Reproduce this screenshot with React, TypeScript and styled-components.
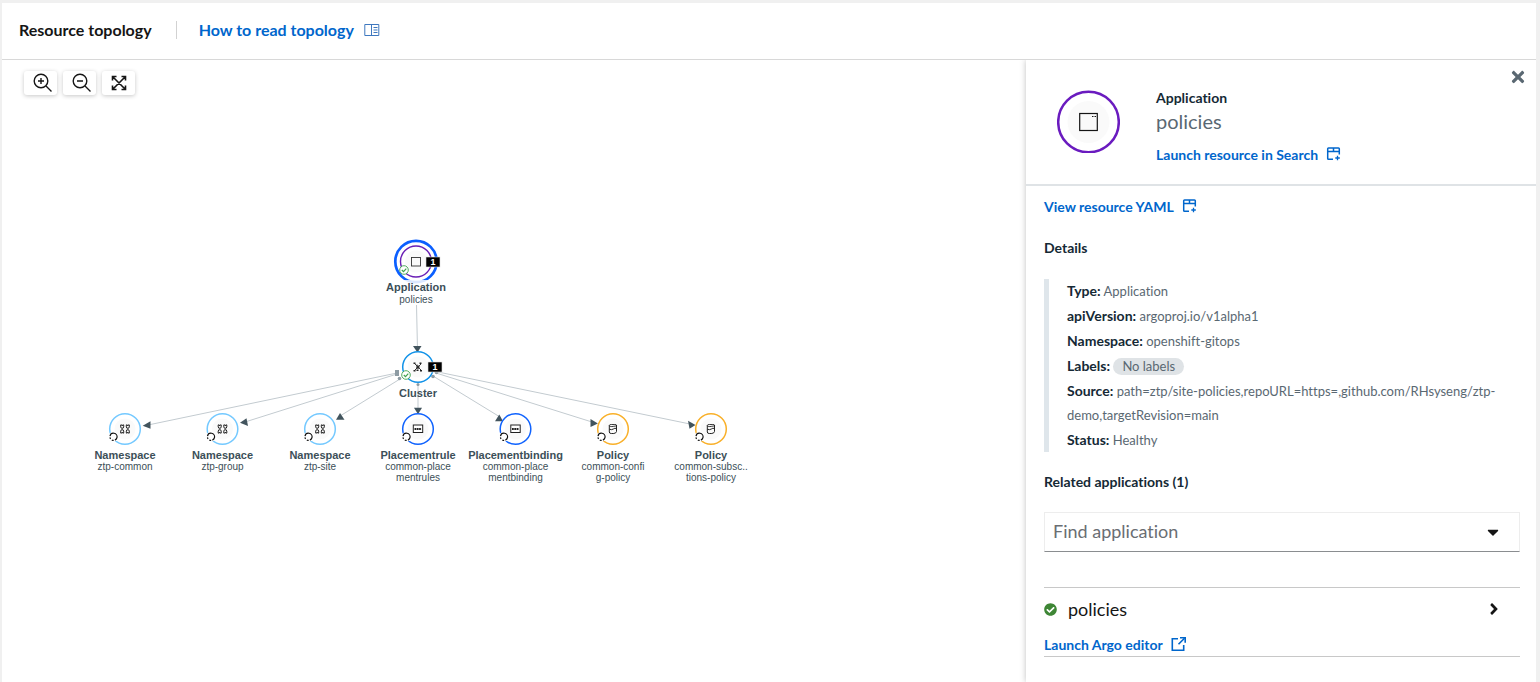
import React from "react";
import styled, { createGlobalStyle } from "styled-components";
import { FaTimes, FaCaretDown, FaAngleRight, FaCheckCircle } from "react-icons/fa";

const GlobalStyle = createGlobalStyle`
  *, *::before, *::after { box-sizing: border-box; }
  body {
    margin: 0;
    background: #f0f0f0;
    color: #151515;
    font-family: Lato, "Liberation Sans", sans-serif;
    font-size: 14px;
    font-variant-ligatures: none;
    line-height: 24px;
  }
`;

const Page = styled.main`
  display: flex;
  flex-direction: column;
  min-height: 100vh;
  padding: 3px 4px 0 2px;
`;

const Header = styled.header`
  display: flex;
  align-items: center;
  height: 57px;
  padding: 0 17px 2px;
  background: #fff;
  border-bottom: 1px solid #d8d8d8;
`;

const Title = styled.h1`
  margin: 0 22px 0 0;
  padding-right: 24px;
  border-right: 1px solid #d2d2d2;
  font-size: 16px;
  font-weight: 700;
  line-height: 18px;
  color: #151515;
`;

const Link = styled.a<{ $large?: boolean }>`
  display: inline-flex;
  align-items: center;
  gap: ${(p) => (p.$large ? "10px" : "8px")};
  color: #06c;
  font-size: ${(p) => (p.$large ? "16px" : "14px")};
  font-weight: 700;
  line-height: 20px;
  text-decoration: none;

  svg { flex: none; }
`;

const Body = styled.div`
  display: flex;
  flex: 1;
  background: #fff;
`;

const Canvas = styled.section`
  flex: 1;
  min-width: 0;
  overflow: hidden;
`;

const Toolbar = styled.div`
  display: flex;
  gap: 6px;
  height: 40px;
  padding: 11px 22px 4px;
`;

const ToolButton = styled.button`
  display: flex;
  align-items: center;
  justify-content: center;
  width: 33px;
  height: 24px;
  padding: 0;
  border: 0;
  border-radius: 3px;
  background: #fff;
  box-shadow: 0 1px 4px rgba(0, 0, 0, 0.22);
  color: #161616;
`;

const Graph = styled.svg`
  display: block;
  width: 100%;
  height: 400px;
  font-family: "Liberation Sans", Arial, sans-serif;
  text-anchor: middle;
  fill: #3c4f58;
`;

const NodeTitle = styled.text`
  font-size: 11px;
  font-weight: 700;
`;

const NodeName = styled.text`
  font-size: 10px;
`;

const Drawer = styled.aside`
  flex: none;
  width: 510px;
  background: #fff;
  box-shadow: 0 0 6px rgba(0, 0, 0, 0.25);
  clip-path: inset(0 0 0 -8px);
`;

const DrawerHeader = styled.div`
  display: flex;
  align-items: flex-start;
  height: 126px;
  padding: 8px 9px 0 31px;
  border-bottom: 2px solid #dfe3e6;
`;

const DrawerIcon = styled.svg`
  flex: none;
  margin: 22px 36px 0 0;
`;

const DrawerHeading = styled.div`
  display: flex;
  flex: 1;
  flex-direction: column;
  align-items: flex-start;
  padding-top: 20px;
`;

const Kind = styled.div`
  color: #152935;
  font-weight: 700;
  line-height: 20px;
`;

const ResourceName = styled.h2`
  margin: 0 0 11px;
  color: #5a6872;
  font-size: 20px;
  font-weight: 400;
  line-height: 26px;
`;

const CloseButton = styled.button`
  display: flex;
  padding: 0;
  border: 0;
  background: none;
  color: #5a6872;
  font-size: 18px;
`;

const DrawerBody = styled.div`
  display: flex;
  flex-direction: column;
  align-items: flex-start;
  padding: 11px 16px 24px 18px;
`;

const SectionTitle = styled.h3<{ $top: number }>`
  margin: ${(p) => p.$top}px 0 0;
  color: #152935;
  font-size: 14px;
  font-weight: 700;
  line-height: 20px;
`;

const DetailList = styled.ul`
  display: flex;
  flex-direction: column;
  gap: 1px;
  align-self: stretch;
  margin: 21px 0 0;
  padding: 0 0 0 18px;
  border-left: 5px solid #dfe6eb;
  list-style: none;
`;

const Detail = styled.li`
  color: #5a6872;
  font-size: 13px;
  line-height: 24px;

  b {
    color: #152935;
    font-size: 14px;
    font-weight: 700;
    line-height: 20px;
  }
`;

const Pill = styled.span`
  display: inline-block;
  padding: 0 9px;
  border-radius: 9px;
  background: #dfe3e6;
  line-height: 17px;
`;

const Search = styled.div`
  display: flex;
  align-items: center;
  align-self: stretch;
  height: 40px;
  margin-top: 20px;
  border: 1px solid #ededed;
  border-bottom-color: #8a8d90;
`;

const SearchInput = styled.input`
  flex: 1;
  min-width: 0;
  padding: 0 8px 2px;
  border: 0;
  outline: 0;
  background: none;
  font: inherit;
  font-size: 18px;

  &::placeholder { color: #6a6e73; opacity: 1; }
`;

const ArrowButton = styled.button`
  display: flex;
  justify-content: center;
  width: 16px;
  padding: 0;
  margin-right: 18px;
  border: 0;
  background: none;
  color: #151515;
  font-size: 18px;
`;

const AppCard = styled.div`
  align-self: stretch;
  margin-top: 35px;
  padding-top: 7px;
  border-top: 1px solid #c8c8c8;
  border-bottom: 1px solid #c8c8c8;
`;

const AppRow = styled.div`
  display: flex;
  align-items: center;
  height: 28px;
  margin-bottom: 10px;
  font-size: 18px;
`;

const AppName = styled.span`
  flex: 1;
  margin-left: 11px;
`;

const CardLink = styled.div`
  display: flex;
  height: 23px;
`;

const ZoomIcon = ({ plus }: { plus?: boolean }) => (
  <svg width="20" height="20" viewBox="0 0 20 20" fill="none" stroke="currentColor" strokeWidth="1.4" transform="translate(2 0)">
    <circle cx="8" cy="8" r="6.8" />
    <path d="M13 13l5.500 5.500M5 8h6" />
    {plus && <path d="M8 5v6" />}
  </svg>
);

const FitIcon = () => (
  <svg width="16" height="16" viewBox="0 0 16 16" fill="none" stroke="currentColor" strokeWidth="1.600">
    <path d="M1.500 5.500v-4h4M10.500 1.500h4v4M14.500 10.500v4h-4M5.500 14.500h-4v-4M1.500 1.500l13 13M14.500 1.500l-13 13" />
  </svg>
);

const GuideIcon = () => (
  <svg width="16" height="14" viewBox="0 0 16 14" fill="none" stroke="#3f78bf">
    <path d="M.8 1.500h14v11H.8zM7.500 1.500v11M9.500 4.500h4M9.500 7h4M9.500 9.500h4" />
  </svg>
);

const OpenViewIcon = () => (
  <svg width="15" height="18" viewBox="0 0 15 18" fill="none" stroke="#06c" strokeWidth="1.500">
    <path d="M7 13.200H2.500q-.8 0-.8-.8V2.800q0-.8.8-.8h10q.8 0 .8.800V8.500M1.700 5.500h11.600M7.500 2v3.500" />
    <path d="M9.300 12h4.500M11.500 9.800v4.500" strokeWidth="1.300" />
  </svg>
);

const ExternalIcon = () => (
  <svg width="15" height="18" viewBox="0 0 15 18" fill="none" stroke="#06c" strokeWidth="1.600">
    <path d="M7 2.800H1.300v11.400h11.400V9M7.500 8.300L13.500 2.300" />
    <path d="M9 1.800h5.200v5" />
  </svg>
);

type Glyph = "namespace" | "rule" | "policy";

const GLYPHS: Record<Glyph, React.ReactNode> = {
  namespace: (
    <g fill="none" stroke="#222">
      {[-2.800, 2.800].map((x) =>
        [-2.300, 2.300].map((y) => {
          const side = Math.sign(y);
          return (
            <path
              key={`${x}${y}`}
              d={`M${x - 1.500} ${y + side * 1.800}h1l.500 ${-side}l.500 ${side}h1v${-side * 2}l-.6 ${-side * 1.300}h-1.800l-.6 ${side * 1.300}z`}
            />
          );
        })
      )}
    </g>
  ),
  rule: (
    <g>
      <rect x="-4.700" y="-4" width="9.400" height="7.500" fill="#fff" stroke="#222" />
      <path d="M-3.500 0h7" stroke="#222" strokeWidth="2.200" strokeDasharray="1.800 .5" />
    </g>
  ),
  policy: (
    <g fill="none" stroke="#222">
      <path d="M-3.700-3.500v6.500q0 1.500 2 1.500h2.500q2.700-.5 2.700-2v-6.500M-3.700 .2q2.500 1 4-.200t3.200-.5" />
      <path d="M-3.700-3.500q0-1 2-1h3.500q1.700 0 1.700.8t-2.700 1q-4.500.8-4.500-.8z" strokeWidth="0.900" />
    </g>
  ),
};

const NODES: { x: number; kind: string; name: string[]; color: string; glyph: Glyph }[] = [
  { x: 123, kind: "Namespace", name: ["ztp-common"], color: "#74c9ff", glyph: "namespace" },
  { x: 220.5, kind: "Namespace", name: ["ztp-group"], color: "#74c9ff", glyph: "namespace" },
  { x: 318, kind: "Namespace", name: ["ztp-site"], color: "#74c9ff", glyph: "namespace" },
  { x: 416, kind: "Placementrule", name: ["common-place", "mentrules"], color: "#1063fe", glyph: "rule" },
  { x: 513.5, kind: "Placementbinding", name: ["common-place", "mentbinding"], color: "#1063fe", glyph: "rule" },
  { x: 611, kind: "Policy", name: ["common-confi", "g-policy"], color: "#f9b029", glyph: "policy" },
  { x: 709, kind: "Policy", name: ["common-subsc..", "tions-policy"], color: "#f9b029", glyph: "policy" },
];

const EDGES: { line: string; head: string }[] = [
  { line: "M414.500 205L415.500 250", head: "411,246 419.500,246 415.500,252.500" },
  { line: "M395 273L146 325", head: "140.700,325.700 148.500,321.300 148.500,328.700" },
  { line: "M395 274L243 322", head: "238,322.700 244.500,318.300 246,326" },
  { line: "M398 279L338 316", head: "334,319.700 342.500,319.700 338,313" },
  { line: "M416 284V310", head: "412,307.700 420,307.700 416,314.200" },
  { line: "M431 276L498 317", head: "493,321.300 501,321.300 497.300,314.500" },
  { line: "M434 273L590 322", head: "588.500,319 595.900,323.500 588.500,327" },
  { line: "M436 272L688 324", head: "686,320.700 693.500,325 687.500,328.700" },
];

const Healthy = ({ x, y }: { x: number; y: number }) => (
  <g transform={`translate(${x} ${y})`} fill="#fff" stroke="#3fa34d">
    <circle r="4.300" strokeWidth="0.900" />
    <path d="M-2.200 0l1.700 1.700L2.300-1.400" fill="none" strokeWidth="1.200" />
  </g>
);

const CountBadge = ({ x, y }: { x: number; y: number }) => (
  <g transform={`translate(${x} ${y})`}>
    <rect width="14" height="10" fill="#000" stroke="#ddd" strokeWidth="0.600" />
    <text x="7" y="8" fontSize="9" fontWeight="700" fill="#fff">1</text>
  </g>
);

const Topology = () => (
  <Graph role="img" aria-label="Resource topology diagram">
    {EDGES.map((e) => (
      <g key={e.head}>
        <path d={e.line} stroke="#c3cbd0" fill="none" />
        <polygon points={e.head} fill="#42545d" />
      </g>
    ))}
    <g fill="#8d9ba3">
      <rect x="393" y="270" width="4" height="6" />
      <circle cx="397.500" cy="278.500" r="1.800" />
      <circle cx="416" cy="284.500" r="1.500" />
      <circle cx="431" cy="276.500" r="1.800" />
      <circle cx="434.500" cy="272.500" r="1.800" />
    </g>

    <circle cx="414" cy="161.500" r="20.700" fill="#fff" stroke="#0b5fff" strokeWidth="2.700" />
    <circle cx="414" cy="161.500" r="15.500" fill="#fff" stroke="#6a1fb5" strokeWidth="1.400" />
    <circle cx="414" cy="161.500" r="11" fill="#fafafa" />
    <rect x="409.500" y="157.500" width="9" height="8.500" fill="#fafafa" stroke="#333" strokeWidth="0.900" />
    <Healthy x={402} y={170} />
    <CountBadge x={424} y={157} />
    <rect x="383" y="180" width="62" height="25" fill="#fff" opacity="0.850" />
    <NodeTitle x="414" y="191">Application</NodeTitle>
    <NodeName x="414" y="203">policies</NodeName>

    <circle cx="416" cy="267" r="15.300" fill="#fff" stroke="#1192e8" strokeWidth="1.500" />
    <circle cx="416" cy="267" r="10.500" fill="#fafafa" />
    <g transform="translate(416 267)" stroke="#222" fill="none" strokeWidth="0.900">
      <path d="M-3-3L3 3M3-3L-3 3M-1-2.500v2M-2 1h3" />
      <path d="M-4.500-3.800h2M1.500-3.800h2M-4.500 3.800h2M2 3.800h2M-1.500 3.300h2" strokeWidth="1.400" />
      <circle r="1.200" />
    </g>
    <Healthy x={404} y={275} />
    <CountBadge x={426} y={262} />
    <NodeTitle x="416" y="297">Cluster</NodeTitle>

    {NODES.map((n) => (
      <g key={n.x} transform={`translate(${n.x} 329)`}>
        <circle r="15.300" fill="#fff" stroke={n.color} strokeWidth="1.500" />
        <circle r="10.500" fill="#fafafa" />
        {GLYPHS[n.glyph]}
        <circle cx="-11.500" cy="7.800" r="5" fill="#fff" />
        <circle cx="-11.500" cy="7.800" r="3.600" fill="none" stroke="#111" strokeWidth="1.200" strokeDasharray="9 1.200 2 1.500 1.500 1.500" transform="rotate(-80 -11.500 7.800)" />
        <NodeTitle y="30">{n.kind}</NodeTitle>
        {n.name.map((t, i) => (
          <NodeName key={t} y={41 + i * 11}>{t}</NodeName>
        ))}
      </g>
    ))}
  </Graph>
);

const App = () => (
  <>
    <GlobalStyle />
    <Page>
      <Header>
        <Title>Resource topology</Title>
        <Link href="#guide" $large>
          How to read topology
          <GuideIcon />
        </Link>
      </Header>
      <Body>
        <Canvas>
          <Toolbar>
            <ToolButton type="button" aria-label="Zoom in"><ZoomIcon plus /></ToolButton>
            <ToolButton type="button" aria-label="Zoom out"><ZoomIcon /></ToolButton>
            <ToolButton type="button" aria-label="Fit to screen"><FitIcon /></ToolButton>
          </Toolbar>
          <Topology />
        </Canvas>
        <Drawer>
          <DrawerHeader>
            <DrawerIcon width="63" height="63" viewBox="0 0 63 63">
              <circle cx="31.500" cy="32" r="30.300" fill="#fff" stroke="#6a1bbf" strokeWidth="2.500" />
              <circle cx="31.500" cy="32" r="21" fill="#fafafa" />
              <rect x="22.700" y="23.500" width="17.600" height="17" fill="none" stroke="#161616" strokeWidth="1.200" />
              <path d="M35 26.500h1.500M37.500 26.500H39" stroke="#161616" />
            </DrawerIcon>
            <DrawerHeading>
              <Kind>Application</Kind>
              <ResourceName>policies</ResourceName>
              <Link href="#search">
                Launch resource in Search
                <OpenViewIcon />
              </Link>
            </DrawerHeading>
            <CloseButton type="button" aria-label="Close"><FaTimes /></CloseButton>
          </DrawerHeader>
          <DrawerBody>
            <Link href="#yaml">
              View resource YAML
              <OpenViewIcon />
            </Link>
            <SectionTitle $top={21}>Details</SectionTitle>
            <DetailList>
              <Detail><b>Type:</b> Application</Detail>
              <Detail><b>apiVersion:</b> argoproj.io/v1alpha1</Detail>
              <Detail><b>Namespace:</b> openshift-gitops</Detail>
              <Detail><b>Labels:</b> <Pill>No labels</Pill></Detail>
              <Detail><b>Source:</b> path=ztp/site-policies,repoURL=https=,github.com/RHsyseng/ztp-demo,targetRevision=main</Detail>
              <Detail><b>Status:</b> Healthy</Detail>
            </DetailList>
            <SectionTitle $top={20}>Related applications (1)</SectionTitle>
            <Search>
              <SearchInput type="text" placeholder="Find application" aria-label="Find application" />
              <ArrowButton type="button" aria-label="Show applications"><FaCaretDown /></ArrowButton>
            </Search>
            <AppCard>
              <AppRow>
                <FaCheckCircle size={13} color="#3e8635" />
                <AppName>policies</AppName>
                <ArrowButton type="button" aria-label="Expand policies"><FaAngleRight /></ArrowButton>
              </AppRow>
              <CardLink>
                <Link href="#argo">
                  Launch Argo editor
                  <ExternalIcon />
                </Link>
              </CardLink>
            </AppCard>
          </DrawerBody>
        </Drawer>
      </Body>
    </Page>
  </>
);

export default App;
